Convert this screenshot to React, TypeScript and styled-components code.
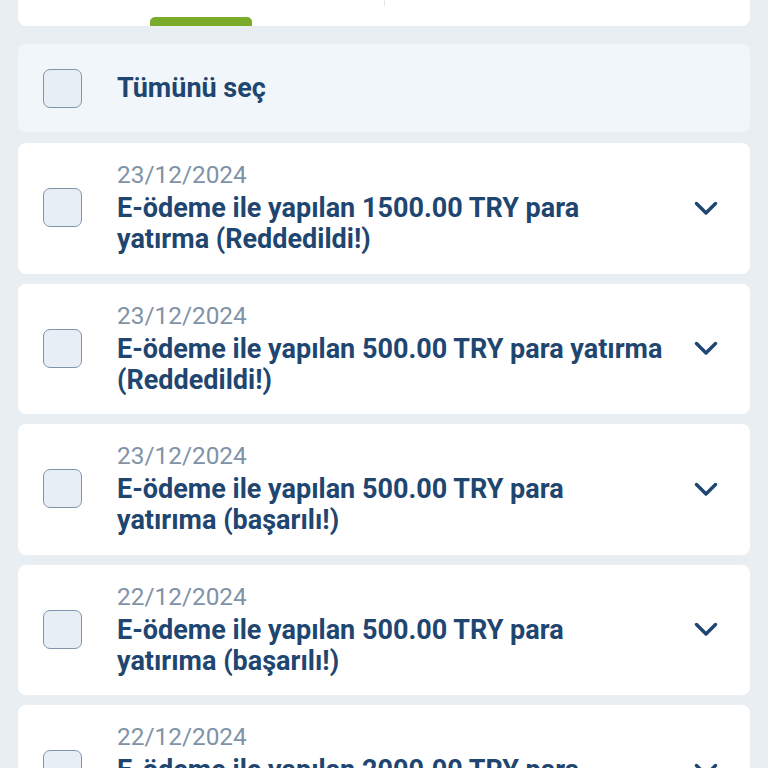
import { FC } from "react";
import styled, { createGlobalStyle } from "styled-components";

const GlobalStyle = createGlobalStyle`
  body {
    margin: 0;
    background: #e9eef2;
    font-family: Roboto, "Liberation Sans", sans-serif;
  }
`;

const Page = styled.div`
  padding: 0 18px;
  display: flex;
  flex-direction: column;
`;

const TopCard = styled.div`
  height: 26px;
  background: #fff;
  border-radius: 0 0 8px 8px;
  margin-bottom: 18px;
`;

const Tabs = styled.div`
  display: grid;
  grid-template-columns: 367px 1fr;
  height: 100%;
`;

const TabWrap = styled.div`
  height: 100%;
  display: flex;
  flex-direction: column;
`;

const TabCell = styled.div<{ $divider?: boolean }>`
  display: flex;
  align-items: flex-end;
  padding-left: 132px;
  border-right: ${(p) => (p.$divider ? "1px solid #e3e7eb" : "none")};
  height: ${(p) => (p.$divider ? "8px" : "100%")};
`;

const ActiveBar = styled.div`
  width: 102px;
  height: 9px;
  background: #7aab2a;
  border-radius: 5px 5px 0 0;
`;

const SelectAll = styled.div`
  height: 88px;
  background: #f1f6fa;
  border-radius: 8px;
  display: flex;
  align-items: center;
  padding-left: 25px;
  gap: 35px;
  margin-bottom: 11px;
`;

const Checkbox = styled.div`
  width: 37px;
  height: 37px;
  flex-shrink: 0;
  border: 1.5px solid #7f95ab;
  background: #e8eef5;
  border-radius: 7px;
`;

const Title = styled.div`
  color: #1f4670;
  font-weight: 700;
  font-size: 27px;
  line-height: 31px;
`;

const List = styled.div`
  display: flex;
  flex-direction: column;
  gap: 10px;
`;

const Card = styled.div`
  min-height: 130.5px;
  box-sizing: border-box;
  background: #fff;
  border-radius: 8px;
  display: flex;
  align-items: center;
  padding: 17px 32px 18px 25px;
  gap: 35px;
`;

const Body = styled.div`
  flex: 1;
  display: flex;
  flex-direction: column;
`;

const DateText = styled.div`
  color: #7f93a8;
  font-size: 24.4px;
  line-height: 30px;
  margin-bottom: 3px;
`;

const Chevron = styled.svg`
  width: 24px;
  height: 14px;
  flex-shrink: 0;
  margin-left: -6px;
`;

interface Item {
  date: string;
  title: string;
}

const items: Item[] = [
  { date: "23/12/2024", title: "E-ödeme ile yapılan 1500.00 TRY para yatırma (Reddedildi!)" },
  { date: "23/12/2024", title: "E-ödeme ile yapılan 500.00 TRY para yatırma (Reddedildi!)" },
  { date: "23/12/2024", title: "E-ödeme ile yapılan 500.00 TRY para yatırıma (başarılı!)" },
  { date: "22/12/2024", title: "E-ödeme ile yapılan 500.00 TRY para yatırıma (başarılı!)" },
  { date: "22/12/2024", title: "E-ödeme ile yapılan 2000.00 TRY para yatırıma (başarılı!)" },
];

const Row: FC<Item> = ({ date, title }) => (
  <Card>
    <Checkbox />
    <Body>
      <DateText>{date}</DateText>
      <Title>{title}</Title>
    </Body>
    <Chevron viewBox="0 0 24 14" fill="none">
      <path d="M2.5 2.5l9.5 9.5 9.5-9.5" stroke="#1f4670" strokeWidth="3.4" strokeLinecap="round" strokeLinejoin="round" />
    </Chevron>
  </Card>
);

export default function App() {
  return (
    <>
      <GlobalStyle />
      <Page>
        <TopCard>
          <Tabs>
            <TabWrap>
              <TabCell $divider />
              <TabCell>
                <ActiveBar />
              </TabCell>
            </TabWrap>
            <div />
          </Tabs>
        </TopCard>
        <SelectAll>
          <Checkbox />
          <Title>Tümünü seç</Title>
        </SelectAll>
        <List>
          {items.map((it, i) => (
            <Row key={i} {...it} />
          ))}
        </List>
      </Page>
    </>
  );
}
